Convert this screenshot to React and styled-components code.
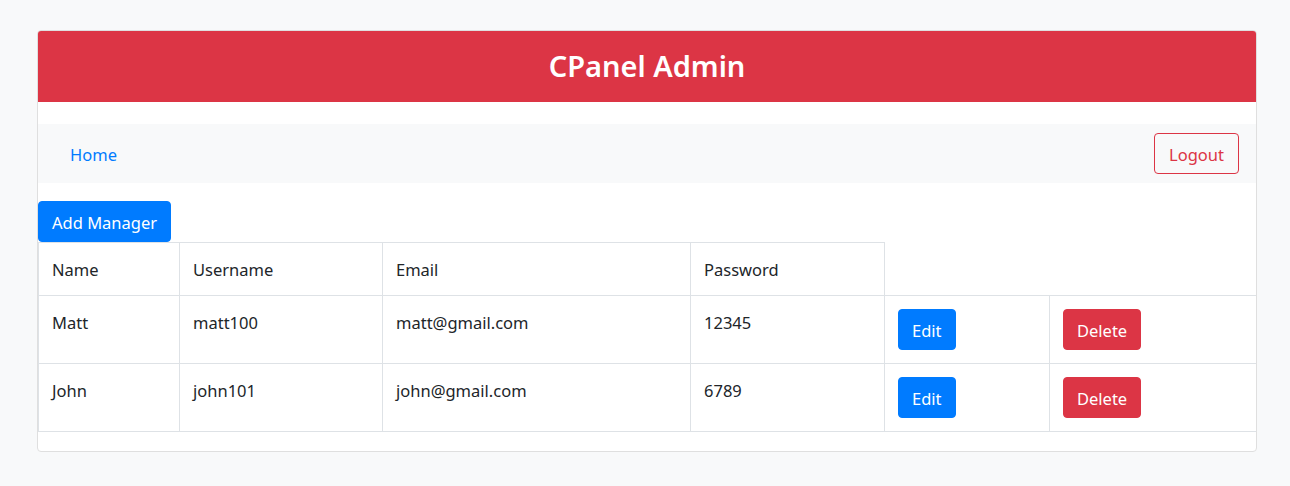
import React from "react";
import styled, { createGlobalStyle } from "styled-components";

const Global = createGlobalStyle`
  html, body { margin: 0; padding: 0; }
  body {
    background: #f8f9fa;
    font-family: "Noto Sans", "Open Sans", sans-serif;
    color: #212529;
    font-size: 16.5px;
  }
`;

const Page = styled.div`
  padding: 30px 33px 35px 37px;
`;

const Card = styled.div`
  background: #fff;
  border: 1px solid #dfdfdf;
  border-radius: 4px;
  overflow: hidden;
  padding-bottom: 19px;
`;

const Header = styled.header`
  background: #dc3545;
  height: 71px;
  display: flex;
  align-items: center;
  justify-content: center;
`;

const Title = styled.h1`
  margin: 0;
  color: #fff;
  font-size: 29px;
  font-weight: 600;
  line-height: 1.2;
`;

const Nav = styled.nav`
  margin-top: 22px;
  background: #f8f9fa;
  height: 59px;
  box-sizing: border-box;
  padding: 0 17px 0 32px;
  display: flex;
  align-items: center;
  justify-content: space-between;
`;

const NavLink = styled.a`
  color: #007bff;
  text-decoration: none;
  font-size: 16.5px;
  padding-top: 2px;
  cursor: pointer;
`;

const Button = styled.button`
  font-family: inherit;
  font-size: 16.5px;
  line-height: 25px;
  padding: 8px ${(p) => p.$px || 13}px 6px;
  border-radius: 4px;
  border: 1px solid ${(p) => p.$color};
  background: ${(p) => (p.$outline ? "transparent" : p.$color)};
  color: ${(p) => (p.$outline ? p.$color : "#fff")};
  cursor: pointer;
  display: inline-block;
  box-sizing: border-box;
  height: 41px;
`;

const Toolbar = styled.div`
  margin-top: 18px;
  display: flex;
`;

const Table = styled.table`
  width: 1218px;
  border-collapse: collapse;
  table-layout: fixed;
`;

const Cell = styled.td`
  border: 1px solid #dee2e6;
  padding: ${(p) => (p.$action ? "13px" : "14px 13px 12px")};
  line-height: 26px;
  vertical-align: top;
  text-align: left;
  font-weight: 400;
  font-size: 16.5px;
`;

const HeadCell = styled(Cell).attrs({ as: "th" })``;

const cols = [141, 203, 308, 194, 165, 207];

const rows = [
  { name: "Matt", username: "matt100", email: "matt@gmail.com", password: "12345" },
  { name: "John", username: "john101", email: "john@gmail.com", password: "6789" },
];

export default function App() {
  return (
    <>
      <Global />
      <Page>
        <Card>
          <Header>
            <Title>CPanel Admin</Title>
          </Header>
          <Nav>
            <NavLink>Home</NavLink>
            <Button $outline $color="#dc3545" $px={14}>Logout</Button>
          </Nav>
          <Toolbar>
            <Button $color="#007bff">Add Manager</Button>
          </Toolbar>
          <Table>
            <colgroup>
              {cols.map((w, i) => (
                <col key={i} style={{ width: w }} />
              ))}
            </colgroup>
            <thead>
              <tr>
                <HeadCell>Name</HeadCell>
                <HeadCell>Username</HeadCell>
                <HeadCell>Email</HeadCell>
                <HeadCell>Password</HeadCell>
              </tr>
            </thead>
            <tbody>
              {rows.map((r) => (
                <tr key={r.username}>
                  <Cell>{r.name}</Cell>
                  <Cell>{r.username}</Cell>
                  <Cell>{r.email}</Cell>
                  <Cell>{r.password}</Cell>
                  <Cell $action>
                    <Button $color="#007bff">Edit</Button>
                  </Cell>
                  <Cell $action>
                    <Button $color="#dc3545">Delete</Button>
                  </Cell>
                </tr>
              ))}
            </tbody>
          </Table>
        </Card>
      </Page>
    </>
  );
}
